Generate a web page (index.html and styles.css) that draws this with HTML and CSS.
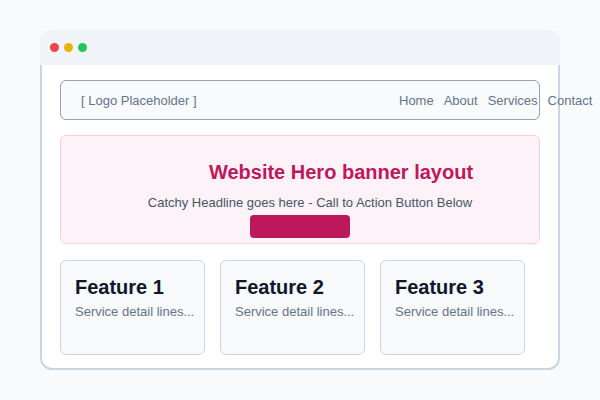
FILE: index.html
```html
<!DOCTYPE html>
<html>
<head>
<meta charset="utf-8">
<link rel="stylesheet" href="styles.css">
</head>
<body>
<div class="window">
  <div class="titlebar">
    <span class="dot red"></span>
    <span class="dot yellow"></span>
    <span class="dot green"></span>
  </div>
  <div class="content">
    <nav class="nav">
      <div class="logo">[ Logo Placeholder ]</div>
      <div class="links">
        <span>Home</span>
        <span>About</span>
        <span>Services</span>
        <span>Contact</span>
      </div>
    </nav>
    <section class="hero">
      <h1 class="hero-title">Website Hero banner layout</h1>
      <p class="hero-sub">Catchy Headline goes here - Call to Action Button Below</p>
      <div class="cta"></div>
    </section>
    <div class="features">
      <div class="card">
        <h2 class="card-title">Feature 1</h2>
        <p class="card-text">Service detail lines...</p>
      </div>
      <div class="card">
        <h2 class="card-title">Feature 2</h2>
        <p class="card-text">Service detail lines...</p>
      </div>
      <div class="card">
        <h2 class="card-title">Feature 3</h2>
        <p class="card-text">Service detail lines...</p>
      </div>
    </div>
  </div>
</div>
</body>
</html>
```
FILE: styles.css
```css
html, body {
  margin: 0;
  padding: 0;
  background: #f8fafc;
  font-family: "Liberation Sans", Arial, sans-serif;
}
body {
  padding: 30px 40px;
  width: 520px;
}
.window {
  width: 516px;
  height: 336px;
  border: 2px solid #cbd5e1;
  border-radius: 12px;
  background: #ffffff;
  box-sizing: content-box;
}
.titlebar {
  margin: -2px -2px 0 -2px;
  height: 35px;
  background: #f1f5f9;
  border-radius: 12px 12px 0 0;
  display: flex;
  align-items: center;
  gap: 5px;
  padding-left: 10px;
}
.dot {
  width: 9px;
  height: 9px;
  border-radius: 50%;
  display: block;
}
.red { background: #ef4444; }
.yellow { background: #eab308; }
.green { background: #22c55e; }
.content {
  padding: 15px 18px 0 18px;
}
.nav {
  height: 38px;
  border: 1px solid #94a3b8;
  border-radius: 6px;
  background: #f8fafc;
  display: flex;
  align-items: center;
  padding: 0 20px;
  font-size: 13px;
  color: #64748b;
}
.logo {
  flex: 1;
}
.links {
  width: 120px;
  flex: none;
  display: flex;
  gap: 10px;
  white-space: nowrap;
}
.hero {
  margin-top: 15px;
  height: 107px;
  border: 1px solid #fbcfe8;
  border-radius: 6px;
  background: #fdf2f8;
  display: flex;
  flex-direction: column;
  align-items: center;
}
.hero-title {
  margin: 24px 0 0 0;
  padding-left: 82px;
  font-size: 20px;
  font-weight: bold;
  color: #be185d;
  line-height: 24px;
}
.hero-sub {
  margin: 11px 0 0 0;
  padding-left: 20px;
  font-size: 13px;
  color: #475569;
  line-height: 16px;
}
.cta {
  margin-top: 4px;
  width: 100px;
  height: 23px;
  border-radius: 4px;
  background: #be185d;
}
.features {
  margin-top: 16px;
  display: flex;
  gap: 15px;
}
.card {
  width: 115px;
  height: 93px;
  border: 1px solid #cbd5e1;
  border-radius: 6px;
  background: #f8fafc;
  padding: 0 14px;
  box-sizing: content-box;
}
.card-title {
  margin: 14px 0 0 0;
  font-size: 20px;
  font-weight: bold;
  color: #0f172a;
  line-height: 24px;
}
.card-text {
  margin: 5px 0 0 0;
  font-size: 13px;
  color: #64748b;
  line-height: 16px;
  white-space: nowrap;
}
```
